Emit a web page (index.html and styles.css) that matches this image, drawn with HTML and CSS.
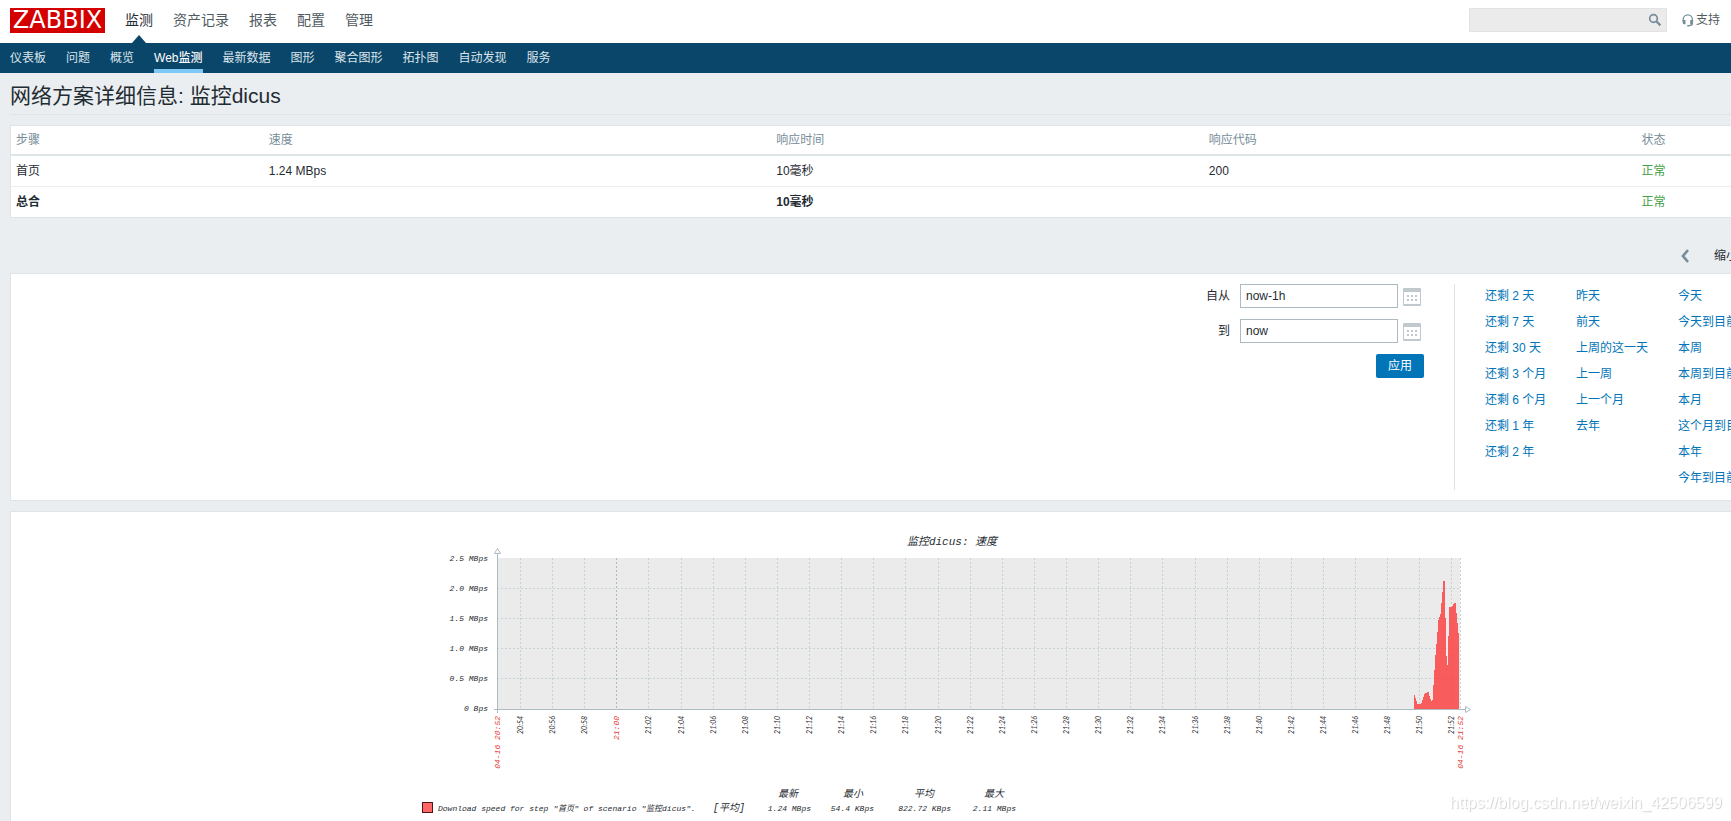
FILE: index.html
```html
<!DOCTYPE html>
<html lang="zh-CN">
<head>
<meta charset="utf-8">
<title>网络方案详细信息: 监控dicus</title>
<link rel="stylesheet" href="styles.css">
</head>
<body>
<header class="top">
  <a class="logo" href="#">ZABBIX</a>
  <nav class="main-nav">
    <a class="active" href="#">监测</a><a href="#">资产记录</a><a href="#">报表</a><a href="#">配置</a><a href="#">管理</a>
  </nav>
  <form class="search">
    <input type="text" aria-label="搜索">
    <button type="button" aria-label="搜索">
      <svg width="14" height="14" viewBox="0 0 14 14"><circle cx="5.5" cy="5.5" r="3.8" fill="none" stroke="#768d99" stroke-width="1.7"/><path d="M8.3 8.3L12.4 12.4" stroke="#768d99" stroke-width="2.2"/></svg>
    </button>
  </form>
  <a class="support" href="#">
    <svg width="12" height="13" viewBox="0 0 12 13"><path d="M1.2 7V5.5a4.6 4.6 0 0 1 9.2 0V9.5q0 2-3.6 2.2" fill="none" stroke="#768d99" stroke-width="1.3"/><path d="M.6 6h2.900v4.200H2Q.6 10 .6 8.500zM8.200 6h2.800v2.500q0 1.500-1.300 1.700H8.200zM5.200 10.900h2v1.600h-2z" fill="#768d99"/></svg>
    <span>支持</span>
  </a>
</header>
<nav class="sub-nav">
  <a href="#">仪表板</a><a href="#">问题</a><a href="#">概览</a><a class="selected" href="#">Web监测</a><a href="#">最新数据</a><a href="#">图形</a><a href="#">聚合图形</a><a href="#">拓扑图</a><a href="#">自动发现</a><a href="#">服务</a>
</nav>
<main class="page">
  <h1>网络方案详细信息: 监控dicus</h1>
  <table class="steps">
    <colgroup><col class="c-step"><col class="c-speed"><col class="c-time"><col class="c-code"><col></colgroup>
    <thead><tr><th>步骤</th><th>速度</th><th>响应时间</th><th>响应代码</th><th>状态</th></tr></thead>
    <tbody>
      <tr><td>首页</td><td>1.24 MBps</td><td>10毫秒</td><td>200</td><td class="ok">正常</td></tr>
      <tr class="total"><td>总合</td><td></td><td>10毫秒</td><td></td><td class="ok">正常</td></tr>
    </tbody>
  </table>
  <div class="time-nav">
    <button type="button" class="prev" aria-label="上一个"><svg width="8" height="14" viewBox="0 0 8 14"><path d="M7 1L2 7l5 6" fill="none" stroke="#768d99" stroke-width="2.6"/></svg></button>
    <button type="button" class="zoom-out">缩小</button>
  </div>
  <section class="panel filter">
    <form class="range">
      <label for="from">自从</label>
      <input id="from" type="text" value="now-1h">
      <button type="button" class="cal" aria-label="日历"><svg width="18" height="18" viewBox="0 0 18 18"><use href="#cal"/></svg></button>
      <label for="to">到</label>
      <input id="to" type="text" value="now">
      <button type="button" class="cal" aria-label="日历"><svg width="18" height="18" viewBox="0 0 18 18"><g id="cal"><path fill="#c0c9ce" fill-rule="evenodd" d="M1 0h16q1 0 1 1v16q0 1-1 1H1q-1 0-1-1V1q0-1 1-1zM1 4v12h16V4z"/><path fill="#c0c9ce" d="M4 7h2v2H4zm4 0h2v2H8zm4 0h2v2h-2zM4 11h2v2H4zm4 0h2v2H8zm4 0h2v2h-2z"/></g></svg></button>
      <button type="button" class="apply">应用</button>
    </form>
    <div class="quick">
      <div class="q1"><a href="#">还剩 2 天</a><a href="#">还剩 7 天</a><a href="#">还剩 30 天</a><a href="#">还剩 3 个月</a><a href="#">还剩 6 个月</a><a href="#">还剩 1 年</a><a href="#">还剩 2 年</a></div>
      <div class="q2"><a href="#">昨天</a><a href="#">前天</a><a href="#">上周的这一天</a><a href="#">上一周</a><a href="#">上一个月</a><a href="#">去年</a></div>
      <div class="q3"><a href="#">今天</a><a href="#">今天到目前</a><a href="#">本周</a><a href="#">本周到目前</a><a href="#">本月</a><a href="#">这个月到目前</a><a href="#">本年</a><a href="#">今年到目前</a></div>
    </div>
  </section>
  <section class="panel graph">
    <svg id="chart" class="chart" width="1104" height="310" viewBox="400 512 1104 310" role="img" aria-label="监控dicus: 速度"></svg>
  </section>
</main>
<div class="watermark">https://blog.csdn.net/weixin_42506599</div>
<script src="chart.js"></script>
</body>
</html>
```

FILE: styles.css
```css
* { box-sizing: border-box; }
html { overflow: hidden; }
body {
  margin: 0;
  min-height: 100vh;
  overflow: hidden;
  background: #ebeef0;
  color: #1f2c33;
  font: 12px/16px "Liberation Sans", "Noto Sans CJK SC", sans-serif;
}
a { color: #0275b8; text-decoration: none; }
button, input { font: inherit; color: inherit; }
button { padding: 0; border: 0; background: none; }

.top { display: flex; align-items: center; height: 43px; padding: 0 10px; background: #fff; }
.logo {
  width: 95px; height: 25px; margin: 0 10px 2px 0;
  background: #d40000; color: #fff;
  font: 24px/25px "DejaVu Sans", sans-serif; text-align: center;
}
.main-nav { display: flex; align-self: stretch; flex: 1; }
.main-nav a {
  position: relative; padding: 10px 10px 0;
  color: #4f5b61; font-size: 14px; line-height: 20px;
}
.main-nav a.active { color: #1f2c33; }
.main-nav a.active::after {
  content: ""; position: absolute; left: 17px; bottom: 0;
  border: 7px solid transparent; border-top: 0; border-bottom: 8px solid #0a466a;
}
.search { position: relative; display: flex; margin: 0 15px 3px 0; }
.search input { width: 198px; height: 24px; border: 1px solid #e3e3e3; background: #ebebeb; }
.search button { position: absolute; right: 5px; top: 5px; height: 14px; }
.search svg, .cal svg, .prev svg { display: block; }
.support { display: flex; align-items: center; gap: 2px; margin: 0 1px 3px 0; color: #4f5b61; }

.sub-nav { display: flex; gap: 20px; height: 30px; padding: 0 10px; background: #0a466a; }
.sub-nav a { padding-top: 7px; color: #dbe5ea; white-space: nowrap; }
.sub-nav a.selected { color: #fff; border-bottom: 4px solid #7ec8f7; font-weight: 500; }

.page { padding-left: 10px; }
h1 {
  margin: 0 0 10px; padding: 9px 0 5px;
  border-bottom: 1px solid #dfe4e7;
  font-size: 21px; line-height: 27px; font-weight: 400;
}
.steps {
  width: 100%; table-layout: fixed;
  border-collapse: separate; border-spacing: 0;
  border: 1px solid #dfe4e7; border-right: 0; background: #fff;
}
.c-step { width: 14.7%; }
.c-speed { width: 29.5%; }
.c-time, .c-code { width: 25.15%; }
.steps th, .steps td { padding: 7px 5px; text-align: left; white-space: nowrap; }
.steps th { padding: 6px 5px; color: #768d99; font-weight: 400; border-bottom: 2px solid #dfe4e7; }
.steps td { height: 31px; border-bottom: 1px solid #ebeef0; }
.steps .total td { height: 30px; border-bottom: 0; font-weight: 700; }
.steps td.ok, .steps .total td.ok { color: #429e47; font-weight: 400; }

.time-nav { display: flex; justify-content: flex-end; align-items: center; gap: 25px; height: 35px; margin-top: 20px; }
.zoom-out { width: 17px; white-space: nowrap; text-align: left; }

.panel { border: 1px solid #dfe4e7; border-right: 0; background: #fff; }
.filter { display: flex; justify-content: flex-end; height: 228px; padding: 10px 0; }
.range {
  display: grid; grid-template-columns: auto 158px 21px;
  column-gap: 5px; row-gap: 11px; align-content: start;
  margin-right: 30px;
}
.range label { padding-right: 5px; line-height: 24px; text-align: right; }
.range input { height: 24px; padding: 0 5px; border: 1px solid #acbbc2; background: #fff; }
.cal { width: 18px; padding-top: 2px; }
.apply {
  grid-column: 1 / -1; justify-self: end;
  width: 48px; height: 24px; border-radius: 2px;
  background: #0275b8; color: #fff;
}
.quick { display: flex; padding-left: 30px; border-left: 1px solid #dfe4e7; }
.quick div { display: flex; flex-direction: column; gap: 10px; padding-top: 4px; }
.quick a { white-space: nowrap; }
.q1 { width: 91px; }
.q2 { width: 102px; }
.q3 { width: 53px; }

.graph { display: flex; justify-content: center; margin-top: 10px; padding-left: 161px; }
.chart { display: block; flex: none; font-family: "Liberation Mono", "Noto Sans CJK SC", monospace; font-style: italic; }
.chart text { fill: #1f2c33; }
.chart text.red { fill: #e33734; }
.label { font-size: 8px; }
.minute { font-family: Lato, sans-serif; font-size: 7px; }
.head { font-size: 10px; }
.title { font-size: 11px; }
.watermark {
  position: fixed; right: 9px; bottom: 8px;
  color: #fff; font-size: 16px; line-height: 20px;
  text-shadow: 1px 1px 1px #d0d0d0;
}
```

FILE: chart.js
```js
const svg = document.getElementById('chart');
const NS = 'http://www.w3.org/2000/svg';
function add(tag, attrs, text) {
  const e = document.createElementNS(NS, tag);
  for (const k in attrs) e.setAttribute(k, attrs[k]);
  if (text) e.textContent = text;
  svg.appendChild(e);
}
const left = 497, right = 1460, top_ = 558, base = 709;
add('rect', {x: left, y: top_, width: right - left, height: base - top_, fill: '#ebebeb'});

function line(x1, y1, x2, y2, stroke, dash) {
  add('line', {x1, y1, x2, y2, stroke, 'stroke-dasharray': dash || 'none', 'shape-rendering': 'crispEdges'});
}
['2.5 MBps', '2.0 MBps', '1.5 MBps', '1.0 MBps', '0.5 MBps', '0 Bps'].forEach((label, i) => {
  if (i > 0 && i < 5) line(left, top_ + i * 30 + 0.5, right, top_ + i * 30 + 0.5, '#c7d3d9', '2 2');
  add('text', {x: 488, y: 561 + i * 30, 'text-anchor': 'end', class: 'label'}, label);
});

function tick(x, label, cls) {
  add('text', {'text-anchor': 'end', transform: `translate(${x + 3} 716) rotate(-90)`, class: cls}, label);
}
for (let i = 0; i < 30; i++) {
  const x = Math.round(520 + i * 32.12);
  const min = 54 + i * 2;
  const label = `${20 + Math.floor(min / 60)}:${String(min % 60).padStart(2, '0')}`;
  const hour = min % 60 === 0;
  line(x + 0.5, top_, x + 0.5, base, hour ? '#acbbb9' : '#c7d0d4', '2 2');
  tick(x, label, hour ? 'label red' : 'minute');
}
line(right + 0.5, top_, right + 0.5, base, '#c7d0d4', '2 2');
tick(497, '04-16 20:52', 'label red');
tick(1460, '04-16 21:52', 'label red');

/* column heights, one per pixel */
const cols = [14,11,8,5,5,5,5,6,9,12,15,16,16,17,17,13,10,8,9,24,39,54,65,77,89,92,95,106,117,128,128,91,53,44,73,102,102,102,103,105,106,106,96,86,76];
let d = `M1414 ${base}`;
cols.forEach((h, i) => { d += `V${base - h}H${1415 + i}`; });
add('path', {d: d + `V${base}z`, fill: '#fb3e3e', 'fill-opacity': 0.83, 'shape-rendering': 'crispEdges'});

line(497.5, 553, 497.5, 713, '#acbbc2');
line(494, 709.5, 1465, 709.5, '#acbbc2');
add('path', {d: 'M494.500 553.500h6l-3-5zM1465.500 706.500v6l5-3z', fill: '#fff', stroke: '#acbbc2'});

add('text', {x: 952, y: 545, 'text-anchor': 'middle', class: 'title'}, '监控dicus: 速度');
add('rect', {x: 422.5, y: 802.5, width: 10, height: 10, fill: '#ff6666', stroke: '#551414'});
add('text', {x: 438, y: 811, class: 'label'}, 'Download speed for step "首页" of scenario "监控dicus".');
add('text', {x: 745, y: 811, 'text-anchor': 'end', class: 'head'}, '[平均]');
[[788, '最新', 811, '1.24 MBps'], [853, '最小', 874, '54.4 KBps'], [924, '平均', 951, '822.72 KBps'], [994, '最大', 1016, '2.11 MBps']].forEach(r => {
  add('text', {x: r[0], y: 797, 'text-anchor': 'middle', class: 'head'}, r[1]);
  add('text', {x: r[2], y: 811, 'text-anchor': 'end', class: 'label'}, r[3]);
});
```
